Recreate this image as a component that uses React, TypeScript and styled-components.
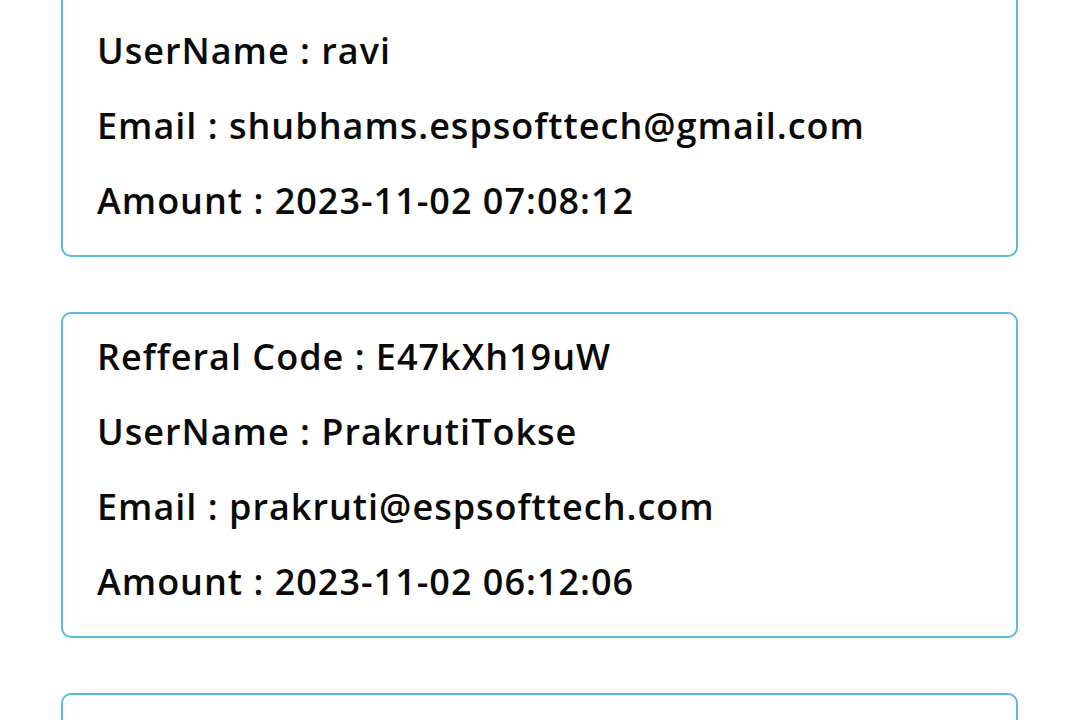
import React from "react";
import styled, { createGlobalStyle } from "styled-components";

const Global = createGlobalStyle`
  html, body { margin: 0; padding: 0; background: #ffffff; }
  body { font-family: "Open Sans", "Noto Sans", sans-serif; overflow: hidden; }
`;

const List = styled.div`
  display: flex;
  flex-direction: column;
  gap: 55px;
  padding: 0 62px 0 61px;
  margin-top: -69px;
`;

const Card = styled.div`
  border: 2.5px solid #5bbbdc;
  border-radius: 10px;
  padding: 5px 34px 17px;
  display: flex;
  flex-direction: column;
`;

const Row = styled.div`
  font-family: "Open Sans", "Noto Sans", sans-serif;
  font-weight: 600;
  font-size: 36px;
  letter-spacing: 1px;
  line-height: 75px;
  color: #0a0a0a;
  white-space: nowrap;
`;

type Item = { code: string; user: string; email: string; amount: string };

const items: Item[] = [
  { code: "E47kXh19uW", user: "ravi", email: "shubhams.espsofttech@gmail.com", amount: "2023-11-02 07:08:12" },
  { code: "E47kXh19uW", user: "PrakrutiTokse", email: "prakruti@espsofttech.com", amount: "2023-11-02 06:12:06" },
  { code: "E47kXh19uW", user: "ravi", email: "ravi@espsofttech.com", amount: "2023-11-02 05:10:01" },
];

export default function App() {
  return (
    <>
      <Global />
      <List>
        {items.map((it, i) => (
          <Card key={i}>
            <Row>Refferal Code : {it.code}</Row>
            <Row>UserName : {it.user}</Row>
            <Row>Email : {it.email}</Row>
            <Row>Amount : {it.amount}</Row>
          </Card>
        ))}
      </List>
    </>
  );
}
